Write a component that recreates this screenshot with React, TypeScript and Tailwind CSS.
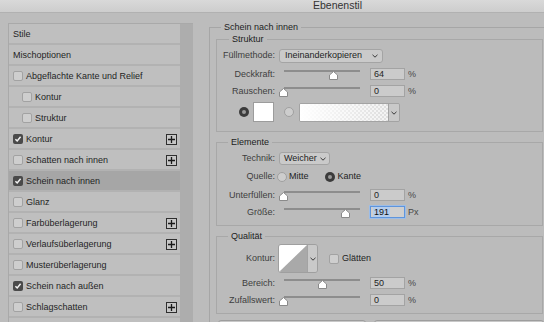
import React from 'react';

type Item = { label: string; plain?: boolean; check?: boolean; indent?: boolean; plus?: boolean; selected?: boolean };

const items: Item[] = [
  { label: 'Stile', plain: true },
  { label: 'Mischoptionen', plain: true },
  { label: 'Abgeflachte Kante und Relief' },
  { label: 'Kontur', indent: true },
  { label: 'Struktur', indent: true },
  { label: 'Kontur', check: true, plus: true },
  { label: 'Schatten nach innen', plus: true },
  { label: 'Schein nach innen', check: true, selected: true },
  { label: 'Glanz' },
  { label: 'Farbüberlagerung', plus: true },
  { label: 'Verlaufsüberlagerung', plus: true },
  { label: 'Musterüberlagerung' },
  { label: 'Schein nach außen', check: true },
  { label: 'Schlagschatten', plus: true },
  { label: '', plain: true },
];

function Check({ checked }: { checked?: boolean }) {
  if (checked) {
    return (
      <span className="w-[10px] h-[10px] rounded-[2px] bg-[#4a4a4a] flex items-center justify-center shrink-0">
        <svg width="8" height="8" viewBox="0 0 8 8">
          <path d="M1.4 4.2 L3.2 6 L6.6 1.8" stroke="#f2f2f2" strokeWidth="1.5" fill="none" />
        </svg>
      </span>
    );
  }
  return <span className="block w-[10px] h-[10px] rounded-[2px] bg-[#cecece] border border-[#a2a2a2] shrink-0" />;
}

function Plus() {
  return (
    <span className="ml-auto mr-[3px] w-[11px] h-[11px] border border-[#2f2f2f] bg-[#c7c7c7] flex items-center justify-center">
      <svg width="7" height="7" viewBox="0 0 7 7">
        <path d="M3.5 0 V7 M0 3.5 H7" stroke="#1a1a1a" strokeWidth="1.3" />
      </svg>
    </span>
  );
}

function Chevron() {
  return (
    <svg width="6" height="4" viewBox="0 0 6 4">
      <path d="M0.5 0.8 L3 3.2 L5.5 0.8" stroke="#3a3a3a" strokeWidth="1" fill="none" />
    </svg>
  );
}

function Radio({ on }: { on?: boolean }) {
  if (on) {
    return (
      <span className="w-[10px] h-[10px] rounded-full bg-[#3b3b3b] flex items-center justify-center shrink-0">
        <span className="block w-[4px] h-[4px] rounded-full bg-[#9a9a9a]" />
      </span>
    );
  }
  return <span className="block w-[10px] h-[10px] rounded-full bg-[#cdcdcd] border border-[#a0a0a0] shrink-0" />;
}

function Slider({ thumb }: { thumb: number }) {
  return (
    <div className="relative ml-[4px] w-[84px] h-[12px] shrink-0">
      <div className="absolute left-[5px] top-[2px] w-[76px] h-[2px] bg-[#8d8d8d]" />
      <svg className="absolute top-[3px]" style={{ left: thumb }} width="9" height="9" viewBox="0 0 9 9">
        <path d="M4.5 0.5 L8.5 4 V8.5 H0.5 V4 Z" fill="#ffffff" stroke="#8a8a8a" strokeWidth="1" />
      </svg>
    </div>
  );
}

function SliderRow({ label, value, unit, thumb, focused, className = '' }: {
  label: string; value: string; unit: string; thumb: number; focused?: boolean; className?: string;
}) {
  return (
    <div className={`flex items-center h-[12px] ${className}`}>
      <span className="w-[58px] text-right text-[#3e3e3e] leading-[12px]">{label}</span>
      <Slider thumb={thumb} />
      {focused ? (
        <div className="ml-[7px] w-[35px] h-[12px] border border-[#5f95dc] shadow-[0_0_0_1px_#9cbde8] bg-[#cfcfcf] pl-[2px] flex items-center">
          <span className="bg-[#b5cdec] text-[#111] leading-[10px] px-[1px]">{value}</span>
        </div>
      ) : (
        <div className="ml-[7px] w-[35px] h-[12px] border border-[#a3a3a3] bg-[#cbcbcb] pl-[3px] leading-[10px] text-[#1e1e1e]">
          {value}
        </div>
      )}
      <span className="ml-[3px] text-[#474747] leading-[12px]">{unit}</span>
    </div>
  );
}

function Label({ children }: { children: React.ReactNode }) {
  return <span className="w-[58px] text-right text-[#3e3e3e] shrink-0">{children}</span>;
}

export default function App() {
  return (
    <div className="w-[544px] h-[322px] overflow-hidden bg-[#bcbcbc] font-['Liberation_Sans',Arial,sans-serif] text-[9px] text-[#1f1f1f] flex flex-col">
      {/* Title bar */}
      <div className="h-[13px] shrink-0 border-b border-[#b1b1b1] bg-[linear-gradient(#d9d9d9,#cdcdcd)] pl-[313px] text-[10.5px] leading-[11px] text-[#333333]">
        Ebenenstil
      </div>

      <div className="flex flex-1 min-h-0">
        {/* Style list */}
        <div className="mt-[10px] ml-[8px] w-[185px] shrink-0 flex border-l border-t border-[#a9a9a9] overflow-hidden">
          <div className="w-[171px] flex flex-col">
            {items.map((it, i) => (
              <div
                key={i}
                className={`h-[21px] shrink-0 border-b-2 border-[#b2b2b2] flex items-center pt-[1px] ${it.selected ? 'bg-[#a6a6a6]' : 'bg-[#bfbfbf]'} ${it.indent ? 'pl-[13px]' : 'pl-[4px]'}`}
              >
                {!it.plain && <Check checked={it.check} />}
                <span className={`${it.plain ? '' : 'ml-[3px]'} leading-[12px]`}>{it.label}</span>
                {it.plus && <Plus />}
              </div>
            ))}
          </div>
          <div className="w-[13px] bg-[#adadad]" />
        </div>

        {/* Effect panel */}
        <fieldset className="ml-[16px] mt-[9px] w-[360px] shrink-0 self-start min-w-0 border border-[#a6a6a6] pl-[6px] pt-[2px]">
          <legend className="ml-[5px] px-[3px] leading-[10px] text-[#1c1c1c]">Schein nach innen</legend>

          {/* Struktur */}
          <fieldset className="w-[327px] min-w-0 border border-[#a8a8a8] bg-[#bbbbbb] pt-[5px] pb-[9px]">
            <legend className="ml-[12px] px-[3px] leading-[10px] text-[#1c1c1c]">Struktur</legend>
            <div className="flex items-center h-[14px]">
              <Label>Füllmethode:</Label>
              <div className="ml-[4px] w-[104px] h-[14px] rounded-[3px] border border-[#a4a4a4] bg-[#cacaca] flex items-center pl-[5px] pr-[4px] text-[#1e1e1e]">
                <span className="flex-1">Ineinanderkopieren</span>
                <Chevron />
              </div>
            </div>
            <SliderRow className="mt-[5px]" label="Deckkraft:" value="64" unit="%" thumb={50} />
            <SliderRow className="mt-[5px]" label="Rauschen:" value="0" unit="%" thumb={0} />
            <div className="mt-[5px] h-[20px] flex items-center pl-[22px]">
              <Radio on />
              <span className="block ml-[4px] w-[21px] h-[20px] border border-[#9c9c9c] bg-white" />
              <span className="ml-[10px] flex"><Radio /></span>
              <div className="ml-[5px] mt-[1px] h-[19px] flex rounded-[2px] border border-[#a3a3a3] overflow-hidden">
                <div className="w-[88px] bg-[repeating-conic-gradient(#dedede_0_25%,#f3f3f3_0_50%)] bg-[length:4px_4px]">
                  <div className="w-full h-full bg-[linear-gradient(to_right,#ffffff,#ffffff00)]" />
                </div>
                <div className="w-[11px] bg-[#c9c9c9] border-l border-[#a3a3a3] flex items-center justify-center">
                  <Chevron />
                </div>
              </div>
            </div>
          </fieldset>

          {/* Elemente */}
          <fieldset className="mt-[5px] w-[327px] min-w-0 border border-[#a8a8a8] bg-[#bbbbbb] pt-[5px] pb-[7px]">
            <legend className="ml-[11px] px-[3px] leading-[10px] text-[#1c1c1c]">Elemente</legend>
            <div className="flex items-center h-[13px]">
              <Label>Technik:</Label>
              <div className="ml-[4px] w-[51px] h-[13px] rounded-[3px] border border-[#a4a4a4] bg-[#cacaca] flex items-center pl-[4px] pr-[3px] text-[#1e1e1e]">
                <span className="flex-1">Weicher</span>
                <Chevron />
              </div>
            </div>
            <div className="mt-[6px] flex items-center h-[12px]">
              <Label>Quelle:</Label>
              <span className="ml-[2px] flex"><Radio /></span>
              <span className="ml-[2px] text-[#1e1e1e]">Mitte</span>
              <span className="ml-[16px] flex"><Radio on /></span>
              <span className="ml-[3px] text-[#1e1e1e]">Kante</span>
            </div>
            <SliderRow className="mt-[6px]" label="Unterfüllen:" value="0" unit="%" thumb={0} />
            <SliderRow className="mt-[5px]" label="Größe:" value="191" unit="Px" thumb={62} focused />
          </fieldset>

          {/* Qualität */}
          <fieldset className="mt-[5px] w-[327px] min-w-0 border border-[#a8a8a8] bg-[#bbbbbb] pt-[3px] pb-[7px]">
            <legend className="ml-[11px] px-[3px] leading-[10px] text-[#1c1c1c]">Qualität</legend>
            <div className="flex items-center h-[29px]">
              <Label>Kontur:</Label>
              <div className="ml-[3px] h-[29px] flex rounded-[3px] border border-[#9f9f9f] overflow-hidden">
                <svg width="28" height="27" viewBox="0 0 28 27" className="block">
                  <rect width="28" height="27" fill="#ffffff" />
                  <path d="M0 27 L28 0 L28 27 Z" fill="#a9a9a9" />
                </svg>
                <div className="w-[10px] bg-[#c9c9c9] border-l border-[#a3a3a3] flex items-center justify-center">
                  <Chevron />
                </div>
              </div>
              <span className="ml-[11px] flex"><Check /></span>
              <span className="ml-[3px] text-[#1e1e1e]">Glätten</span>
            </div>
            <SliderRow className="mt-[4px]" label="Bereich:" value="50" unit="%" thumb={39} />
            <SliderRow className="mt-[5px]" label="Zufallswert:" value="0" unit="%" thumb={0} />
          </fieldset>

          <div className="mt-[6px] flex gap-[8px] pl-[2px]">
            <div className="w-[148px] h-[20px] rounded-[3px] border border-[#9d9d9d] bg-[#c8c8c8]" />
            <div className="w-[170px] h-[20px] rounded-[3px] border border-[#9d9d9d] bg-[#c8c8c8]" />
          </div>
        </fieldset>
      </div>
    </div>
  );
}
